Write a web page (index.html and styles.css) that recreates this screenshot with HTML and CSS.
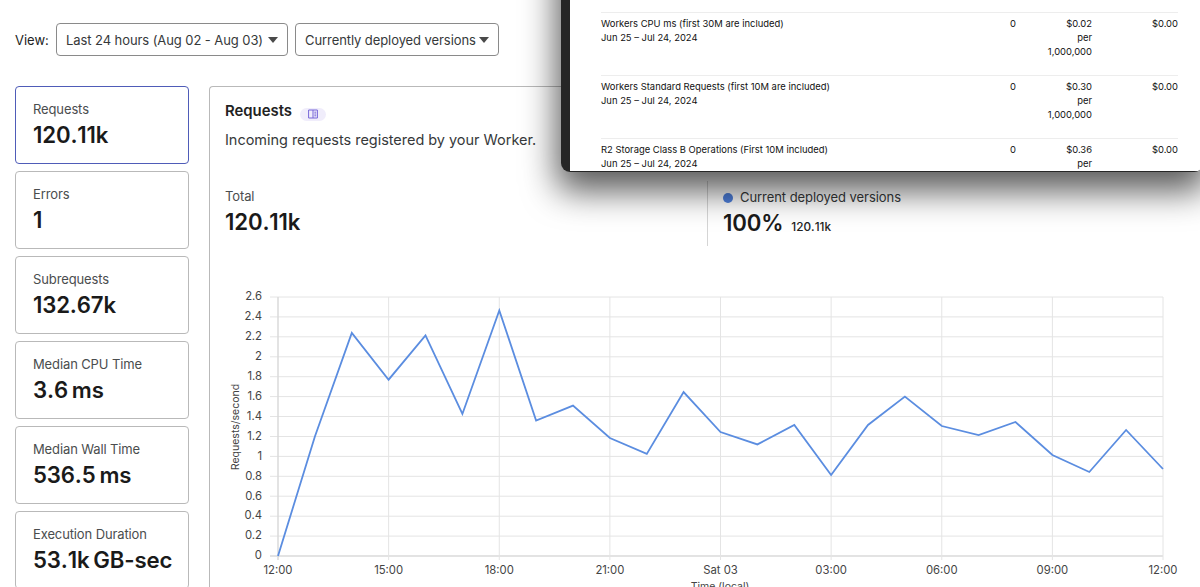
FILE: index.html
```html
<!DOCTYPE html>
<html lang="en">
<head>
    <meta charset="UTF-8">
    <meta name="viewport" content="width=device-width, initial-scale=1.0">
    <title>Worker Metrics</title>
    <link rel="stylesheet" href="styles.css">
</head>
<body>
    <div class="toolbar">
        <span class="view-label">View:</span>
        <button type="button" class="dropdown range"><span>Last 24 hours (Aug 02 - Aug 03)</span><i class="caret"></i></button>
        <button type="button" class="dropdown versions"><span>Currently deployed versions</span><i class="caret"></i></button>
    </div>

    <div class="content">
        <div class="metrics">
            <div class="metric active">
                <div class="metric-name">Requests</div>
                <div class="metric-value">120.11k</div>
            </div>
            <div class="metric">
                <div class="metric-name">Errors</div>
                <div class="metric-value">1</div>
            </div>
            <div class="metric">
                <div class="metric-name">Subrequests</div>
                <div class="metric-value">132.67k</div>
            </div>
            <div class="metric">
                <div class="metric-name">Median CPU Time</div>
                <div class="metric-value">3.6 ms</div>
            </div>
            <div class="metric">
                <div class="metric-name">Median Wall Time</div>
                <div class="metric-value">536.5 ms</div>
            </div>
            <div class="metric">
                <div class="metric-name">Execution Duration</div>
                <div class="metric-value">53.1k GB-sec</div>
            </div>
        </div>

        <div class="panel">
            <div class="panel-title">
                <h2>Requests</h2>
                <span class="docs-badge">
                    <svg width="10" height="10" viewBox="0 0 10 10">
                        <path d="M.6 1h8.8v8H.6zM5 1v8M6.4 3.2h1.8M6.4 5h1.8M6.4 6.8h1.8" fill="none" stroke="#7767d8"/>
                    </svg>
                </span>
            </div>
            <p class="description">Incoming requests registered by your Worker.</p>
            <div class="totals">
                <div class="total">
                    <div class="metric-name">Total</div>
                    <div class="metric-value">120.11k</div>
                </div>
                <div class="deployed">
                    <div class="legend"><i class="dot"></i>Current deployed versions</div>
                    <div class="share"><span class="metric-value">100%</span><span class="count">120.11k</span></div>
                </div>
            </div>
            <svg class="chart" id="chart" width="974" height="320" viewBox="0 0 974 320"></svg>
        </div>
    </div>

    <div class="invoice">
        <div class="invoice-page">
            <div class="line-item">
                <div>Workers CPU ms (first 30M are included)<br>Jun 25 – Jul 24, 2024</div>
                <div class="num">0</div>
                <div class="num">$0.02<br>per<br>1,000,000</div>
                <div class="num">$0.00</div>
            </div>
            <div class="line-item">
                <div>Workers Standard Requests (first 10M are included)<br>Jun 25 – Jul 24, 2024</div>
                <div class="num">0</div>
                <div class="num">$0.30<br>per<br>1,000,000</div>
                <div class="num">$0.00</div>
            </div>
            <div class="line-item">
                <div>R2 Storage Class B Operations (First 10M included)<br>Jun 25 – Jul 24, 2024</div>
                <div class="num">0</div>
                <div class="num">$0.36<br>per</div>
                <div class="num">$0.00</div>
            </div>
        </div>
    </div>

    <script src="chart.js"></script>
</body>
</html>
```

FILE: styles.css
```css
* {
    box-sizing: border-box;
}
body {
    margin: 0;
    height: 587px;
    padding: 23px 0 0 15px;
    overflow: hidden;
    position: relative;
    background: #fff;
    color: #36393a;
    font-family: Inter, "Liberation Sans", sans-serif;
    font-size: 13px;
}
.toolbar {
    display: flex;
    align-items: center;
    height: 33px;
}
.view-label {
    width: 41px;
    color: #222;
}
.dropdown {
    display: flex;
    align-items: center;
    justify-content: space-between;
    height: 33px;
    padding: 0 9px;
    margin-right: 7px;
    background: #fff;
    border: 1px solid #8a8a8a;
    border-radius: 4px;
    font: inherit;
    letter-spacing: -0.08px;
    color: #36393a;
    white-space: nowrap;
}
.range {
    width: 232px;
}
.versions {
    width: 204px;
}
.caret {
    border: 5px solid transparent;
    border-top: 6px solid #4a4a4a;
    border-bottom: 0;
}
.content {
    display: flex;
    gap: 20px;
    margin-top: 30px;
}
.metrics {
    display: flex;
    flex-direction: column;
    gap: 7px;
    width: 174px;
    flex: none;
}
.metric {
    height: 78px;
    padding: 13px 17px;
    border: 1px solid #b9b9b9;
    border-radius: 4px;
}
.metric.active {
    border-color: #4f5cb8;
}
.metric-name {
    font-size: 13px;
    letter-spacing: -0.12px;
    line-height: 18px;
    color: #4a4d4e;
}
.metric-value {
    font-size: 22.2px;
    line-height: 34px;
    font-weight: 600;
    font-kerning: none;
    letter-spacing: -0.15px;
    word-spacing: -1.5px;
    color: #1a1a1a;
    white-space: nowrap;
}
.panel {
    flex: 1;
    height: 501px;
    padding: 14px 0 0 15px;
    border: 1px solid #b9b9b9;
    border-width: 1px 0 0 1px;
    border-radius: 4px 0 0 0;
    overflow: hidden;
}
.panel-title {
    display: flex;
    align-items: center;
    gap: 8px;
    height: 22px;
}
.panel-title h2 {
    margin: -2px 0 0;
    font-size: 14.9px;
    font-weight: 600;
    color: #222;
}
.docs-badge {
    display: flex;
    align-items: center;
    justify-content: center;
    width: 26px;
    height: 13px;
    margin-top: 4px;
    border-radius: 7px;
    background: #f0edfb;
}
.description {
    margin: 6px 0 0;
    font-size: 14.5px;
    letter-spacing: -0.03px;
    line-height: 22px;
}
.totals {
    display: flex;
    height: 65px;
    margin-top: 30px;
}
.total {
    width: 482px;
    padding-top: 6px;
}
.deployed {
    padding: 8px 0 0 15px;
    border-left: 1px solid #d5d5d5;
}
.legend {
    display: flex;
    align-items: center;
    gap: 7px;
    letter-spacing: -0.06px;
    line-height: 17px;
}
.dot {
    width: 10px;
    height: 10px;
    border-radius: 50%;
    background: #4f80dd;
}
.share {
    display: flex;
    align-items: baseline;
    gap: 8px;
}
.count {
    font-size: 11.8px;
    font-weight: 500;
    font-kerning: none;
    color: #222;
}
.chart {
    display: block;
    margin-top: 39px;
    font-size: 11.3px;
    fill: #444;
}
.axis-title {
    font-size: 10.5px;
}
.grid-line {
    stroke: #e4e4e4;
    stroke-width: 1;
}
.axis-line {
    stroke: #dadada;
    stroke-width: 1.5;
}
.series {
    fill: none;
    stroke: #5b8de0;
    stroke-width: 1.8;
}

/* billing window floating over the dashboard */
.invoice {
    position: absolute;
    top: -60px;
    left: 561px;
    width: 642px;
    height: 232px;
    padding: 0 0 1px 9px;
    background: #262626;
    border-radius: 9px;
    box-shadow: 0 15px 34px 4px rgba(0, 0, 0, 0.65);
    overflow: hidden;
}
.invoice-page {
    height: 231px;
    padding: 72px 25px 0 31px;
    background: #fff;
    overflow: hidden;
}
.line-item {
    display: grid;
    grid-template-columns: 1fr 60px 76px 86px;
    height: 62.8px;
    padding-top: 4px;
    border-top: 1px solid #ededed;
    font-size: 9.42px;
    line-height: 14.2px;
    color: #111;
}
.num {
    text-align: right;
}
```

FILE: chart.js
```js
const values = [0, 1.2, 2.24, 1.77, 2.215, 1.425, 2.465, 1.36, 1.51, 1.185, 1.025, 1.645,
    1.245, 1.12, 1.315, 0.813, 1.315, 1.6, 1.305, 1.215, 1.345, 1.014, 0.843, 1.265, 0.873];
const times = ["12:00", "15:00", "18:00", "21:00", "Sat 03", "03:00", "06:00", "09:00", "12:00"];

// Plot area inside the svg
const left = 53, right = 938, top_ = 12, bottom = 271;
const maxY = 2.6;

const x = i => left + (right - left) * i / (values.length - 1);
const y = v => bottom - (bottom - top_) * v / maxY;

let out = "";

// Horizontal grid and y labels
for (let i = 0; i <= 13; i++) {
    const v = i / 5;
    const py = y(v).toFixed(1);
    out += `<line class="${i ? "grid-line" : "axis-line"}" x1="${left - 8}" x2="${right}" y1="${py}" y2="${py}"/>`;
    out += `<text x="37" y="${y(v) + 3.3}" text-anchor="end">${v}</text>`;
}

// Vertical grid and time labels
times.forEach((t, i) => {
    const px = x(i * 3);
    out += `<line class="${i ? "grid-line" : "axis-line"}" x1="${px}" x2="${px}" y1="${top_}" y2="${bottom + 4}"/>`;
    out += `<text x="${px}" y="289" text-anchor="middle">${t}</text>`;
});

out += `<text class="axis-title" x="495" y="305" text-anchor="middle">Time (local)</text>`;
out += `<text class="axis-title" transform="translate(14 142) rotate(-90)" text-anchor="middle">Requests/second</text>`;

const points = values.map((v, i) => x(i).toFixed(1) + "," + y(v).toFixed(1)).join(" ");
out += `<polyline class="series" points="${points}"/>`;

document.getElementById("chart").innerHTML = out;
```
